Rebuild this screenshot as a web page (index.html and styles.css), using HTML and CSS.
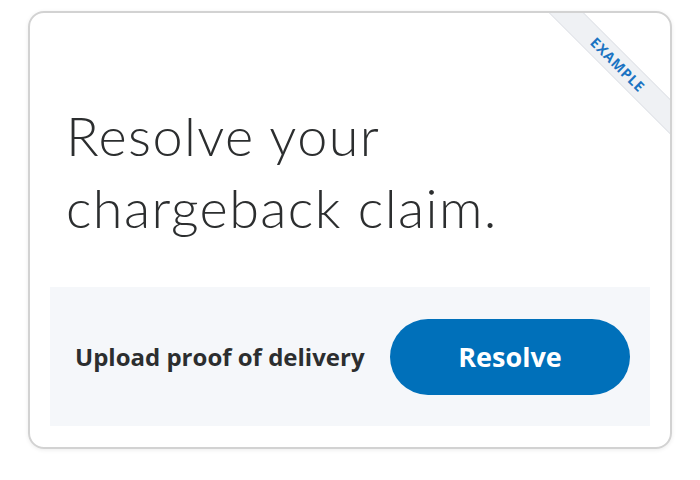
FILE: index.html
```html
<!DOCTYPE html>
<html>
<head>
<meta charset="utf-8">
<link rel="stylesheet" href="styles.css">
</head>
<body>
  <div class="card">
    <div class="ribbon">EXAMPLE</div>
    <h1 class="title">Resolve your<br>chargeback claim.</h1>
    <div class="panel">
      <span class="label">Upload proof of delivery</span>
      <button class="btn">Resolve</button>
    </div>
  </div>
</body>
</html>
```

FILE: styles.css
```css
html, body {
  margin: 0;
  padding: 0;
  background: #ffffff;
}
body {
  padding: 11px 28px;
  font-family: "Open Sans", "Liberation Sans", sans-serif;
}
.card {
  position: relative;
  overflow: hidden;
  width: 640px;
  height: 434px;
  border: 2px solid #d2d2d2;
  border-radius: 16px;
  box-shadow: 0 1px 4px rgba(0, 0, 0, 0.08);
  display: flex;
  flex-direction: column;
  box-sizing: content-box;
}
.ribbon {
  position: absolute;
  left: 488px;
  top: 39px;
  width: 200px;
  height: 23px;
  line-height: 23px;
  background: #eff1f4;
  border-top: 1px solid #e2e5e9;
  border-bottom: 1px solid #e2e5e9;
  transform: rotate(45deg);
  text-align: center;
  color: #1a73c2;
  font-family: "Open Sans", sans-serif;
  font-weight: 700;
  font-size: 14px;
  letter-spacing: 0.8px;
}
.title {
  margin: 87px 0 0 36px;
  font-family: Lato, sans-serif;
  font-weight: 300;
  font-size: 54px;
  letter-spacing: 1.4px;
  line-height: 72px;
  color: #2c2e2f;
}
.panel {
  margin: 43px 20px 0 20px;
  height: 139px;
  background: #f5f7fa;
  display: flex;
  align-items: center;
  justify-content: space-between;
  padding: 0 20px 0 25px;
}
.label {
  font-weight: 700;
  font-size: 24px;
  color: #2c2e2f;
}
.btn {
  width: 240px;
  height: 76px;
  border: none;
  border-radius: 38px;
  background: #0070ba;
  color: #ffffff;
  font-family: "Open Sans", sans-serif;
  font-weight: 700;
  font-size: 27px;
  padding: 0;
}
```
